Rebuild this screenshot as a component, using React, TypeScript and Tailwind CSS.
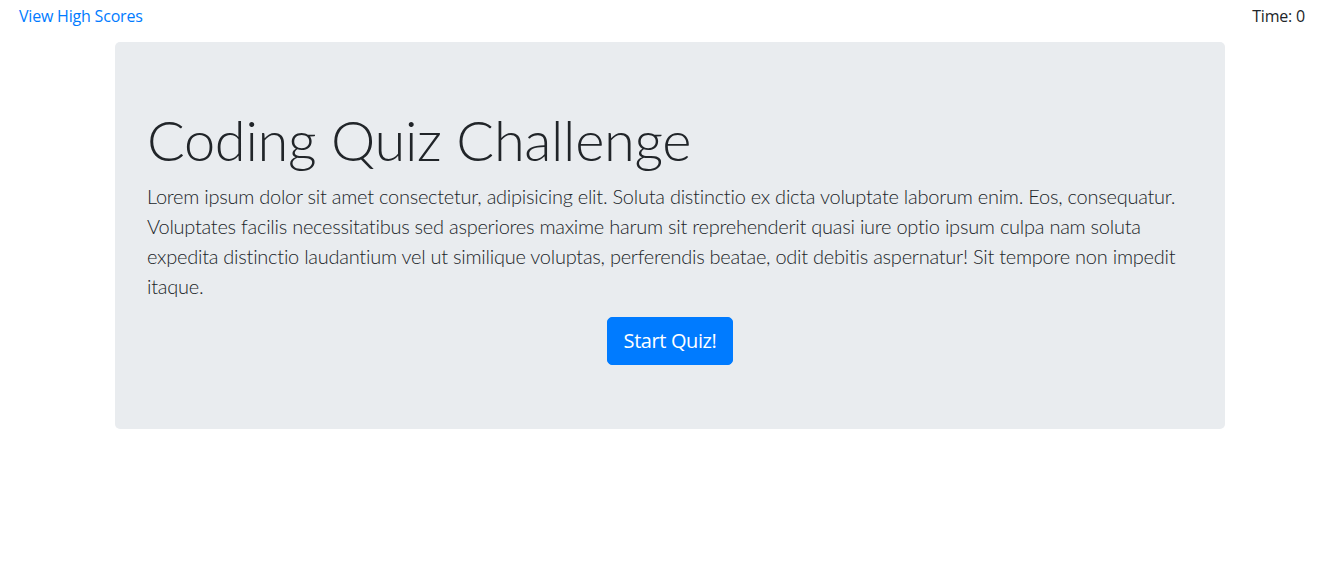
import React from "react";

const App = () => {
  return (
    <div className="min-h-screen bg-white text-[#212529] font-['Open_Sans',sans-serif]">
      <div className="flex justify-between h-[42px] pt-[4px] pl-[19px] pr-[18px] text-base leading-6 tracking-[-0.2px]">
        <a href="#" className="text-[#007bff]">View High Scores</a>
        <span>Time: 0</span>
      </div>
      <div className="w-[1110px] ml-[115px] bg-[#e9ecef] rounded-[5px] px-8 py-16 font-['Lato',sans-serif] [font-variant-ligatures:none]">
        <h1 className="text-[56px] leading-[1.2] font-light mb-2 tracking-[-0.35px]">Coding Quiz Challenge</h1>
        <p className="text-[20px] leading-[30px] font-light mb-4 tracking-[-0.25px]">
          Lorem ipsum dolor sit amet consectetur, adipisicing elit. Soluta distinctio ex dicta voluptate laborum enim. Eos, consequatur. Voluptates facilis necessitatibus sed asperiores maxime harum sit reprehenderit quasi iure optio ipsum culpa nam soluta expedita distinctio laudantium vel ut similique voluptas, perferendis beatae, odit debitis aspernatur! Sit tempore non impedit itaque.
        </p>
        <div className="text-center">
          <button className="bg-[#007bff] text-white text-[20px] leading-[30px] px-4 py-2 border border-[#007bff] rounded-[5px] tracking-[-0.4px] font-['Open_Sans',sans-serif]">
            Start Quiz!
          </button>
        </div>
      </div>
    </div>
  );
};

export default App;
